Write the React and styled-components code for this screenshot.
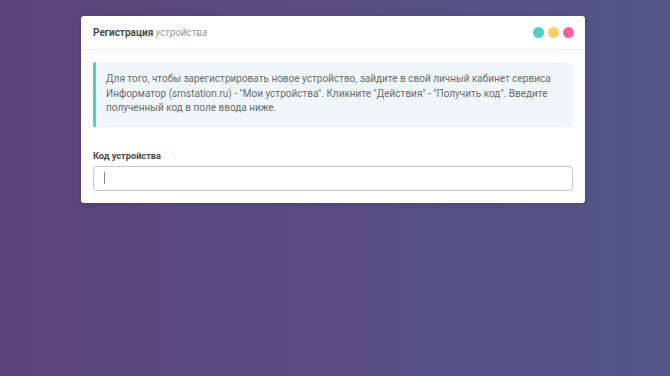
import React from "react";
import styled, { createGlobalStyle } from "styled-components";

const Global = createGlobalStyle`
  html, body { margin: 0; padding: 0; height: 100%; }
  body {
    background: linear-gradient(90deg, #5c4479 0%, #574c82 50%, #52568a 100%);
    font-family: Roboto, "Noto Sans", Arial, sans-serif;
    min-height: 376px;
  }
`;

const Page = styled.div`
  padding: 16px 0 0 81px;
`;

const Card = styled.div`
  width: 504px;
  background: #fff;
  border-radius: 3px;
  box-shadow: 0 1px 4px rgba(0,0,0,0.15);
`;

const Header = styled.div`
  height: 33px;
  display: flex;
  align-items: center;
  justify-content: space-between;
  padding: 0 11px 0 12px;
  border-bottom: 1px solid #eceef2;
`;

const Title = styled.div`
  font-size: 10px;
  font-weight: 700;
  color: #4a4a4a;
  em {
    font-weight: 400;
    font-style: italic;
    color: #9a9a9a;
  }
`;

const Dots = styled.div`
  display: flex;
  gap: 4px;
`;

const Dot = styled.span`
  width: 11px;
  height: 11px;
  border-radius: 50%;
  background: ${(p) => p.$c};
`;

const Body = styled.div`
  padding: 12px 12px 12px 12px;
`;

const Alert = styled.div`
  background: #eff7fb;
  border-left: 3px solid #4fd1c5;
  border-radius: 2px;
  padding: 10px 12px 11px 10px;
  font-size: 10px;
  line-height: 14.6px;
  color: #6b6b6b;
`;

const Label = styled.div`
  margin-top: 23px;
  font-size: 9.2px;
  font-weight: 700;
  color: #4a4a4a;
  line-height: 12px;
`;

const Input = styled.div`
  margin-top: 4px;
  height: 25px;
  box-sizing: border-box;
  border: 1px solid #c7c1e3;
  border-radius: 4px;
  display: flex;
  align-items: center;
  padding-left: 10px;
`;

const Caret = styled.span`
  width: 1px;
  height: 12px;
  background: #888;
`;

export default function App() {
  return (
    <>
      <Global />
      <Page>
        <Card>
          <Header>
            <Title>
              Регистрация <em>устройства</em>
            </Title>
            <Dots>
              <Dot $c="#4fd1c5" />
              <Dot $c="#fcd063" />
              <Dot $c="#f562a2" />
            </Dots>
          </Header>
          <Body>
            <Alert>
              Для того, чтобы зарегистрировать новое устройство, зайдите в свой личный кабинет сервиса
              Информатор (smstation.ru) - "Мои устройства". Кликните "Действия" - "Получить код". Введите
              полученный код в поле ввода ниже.
            </Alert>
            <Label>Код устройства</Label>
            <Input>
              <Caret />
            </Input>
          </Body>
        </Card>
      </Page>
    </>
  );
}
